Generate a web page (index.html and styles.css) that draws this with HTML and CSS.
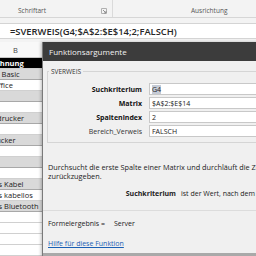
FILE: index.html
```html
<!DOCTYPE html>
<html>
<head>
  <title>Funktionsargumente</title>
  <link rel="stylesheet" href="styles.css">
</head>
<body>
  <div class="ribbon">
    <div class="group group-font">
      <span class="group-label">Schriftart</span>
      <svg class="launcher" width="6" height="6" viewBox="0 0 6 6">
        <path d="M0.5 0.5h5v5h-5z" fill="none" stroke="#b0b0b0" stroke-width="1"/>
        <path d="M2 2l3 3M5 3v2h-2" fill="none" stroke="#909090" stroke-width="1"/>
      </svg>
    </div>
    <div class="group group-align">
      <span class="group-label">Ausrichtung</span>
    </div>
  </div>

  <div class="formula-area">
    <div class="formula-bar">=SVERWEIS(G4;$A$2:$E$14;2;FALSCH)</div>
  </div>

  <div class="workspace">
    <div class="sheet">
      <div class="col-head">B</div>
      <div class="cell cell-head">Bezeichnung</div>
      <div class="cell odd">Visual Basic</div>
      <div class="cell">MS-Office</div>
      <div class="cell odd"></div>
      <div class="cell"></div>
      <div class="cell odd cell-cut">Tintendrucker</div>
      <div class="cell"></div>
      <div class="cell odd cell-cut-more">Fotodrucker</div>
      <div class="cell"></div>
      <div class="cell odd"></div>
      <div class="cell"></div>
      <div class="cell odd cell-maus">Maus Kabel</div>
      <div class="cell cell-maus">Maus kabellos</div>
      <div class="cell odd cell-maus">Maus Bluetooth</div>
      <div class="cell"></div>
      <div class="cell"></div>
      <div class="cell"></div>
      <div class="cell"></div>
    </div>

    <div class="dialog">
      <div class="dialog-title">Funktionsargumente</div>
      <div class="dialog-body">
        <fieldset class="args">
          <legend>SVERWEIS</legend>
          <div class="arg-row">
            <label class="arg-label strong">Suchkriterium</label>
            <div class="arg-input"><span class="sel">G4</span></div>
          </div>
          <div class="arg-row">
            <label class="arg-label strong">Matrix</label>
            <div class="arg-input">$A$2:$E$14</div>
          </div>
          <div class="arg-row">
            <label class="arg-label strong">Spaltenindex</label>
            <div class="arg-input">2</div>
          </div>
          <div class="arg-row">
            <label class="arg-label">Bereich_Verweis</label>
            <div class="arg-input">FALSCH</div>
          </div>
        </fieldset>

        <p class="desc">Durchsucht die erste Spalte einer Matrix und durchläuft die Zeile nach rechts, um den Wert einer Zelle<br>zurückzugeben.</p>

        <div class="arg-help">
          <span class="arg-help-name">Suchkriterium</span>
          <span class="arg-help-text">ist der Wert, nach dem in der ersten Spalte der Matrix gesucht wird.</span>
        </div>
      </div>

      <div class="dialog-foot">
        <div class="result">Formelergebnis =<span class="result-value">Server</span></div>
        <a class="help-link" href="#">Hilfe für diese Funktion</a>
      </div>
      <div class="dialog-bottom"></div>
    </div>
  </div>
</body>
</html>
```

FILE: styles.css
```css
* {
  box-sizing: border-box;
}

body {
  margin: 0;
  width: 256px;
  height: 256px;
  overflow: hidden;
  background-color: #ffffff;
  font-family: "Open Sans", "Noto Sans", sans-serif;
  color: #222222;
}

/* ribbon */
.ribbon {
  display: flex;
  height: 18px;
  background-color: #f3f3f3;
  border-bottom: 1px solid #d6d6d6;
}

.group {
  display: flex;
  align-items: center;
  padding-top: 4px;
  font-size: 6.5px;
  color: #555555;
}

.group-font {
  width: 113px;
  padding-left: 18px;
  border-right: 1px solid #dadada;
}

.launcher {
  margin-left: auto;
  margin-right: 5px;
}

.group-align {
  padding-left: 78px;
}

/* formula bar */
.formula-area {
  height: 24px;
  padding-top: 5px;
  background-color: #f3f3f3;
}

.formula-bar {
  height: 16px;
  padding-left: 10px;
  line-height: 15px;
  font-size: 9.4px;
  font-weight: 600;
  color: #262626;
  background-color: #ffffff;
  border-top: 1px solid #d4d4d4;
  border-bottom: 1px solid #d4d4d4;
  white-space: nowrap;
}

/* sheet */
.workspace {
  position: relative;
}

.sheet {
  width: 66px;
  margin-left: -23px;
}

.col-head {
  height: 16px;
  padding-left: 36px;
  padding-top: 2px;
  line-height: 13px;
  font-size: 7.5px;
  color: #444444;
  background-color: #f8f8f8;
  border-bottom: 1px solid #c6c6c6;
}

.cell {
  height: 11px;
  padding-left: 2px;
  line-height: 10px;
  font-size: 7.5px;
  white-space: nowrap;
  overflow: hidden;
  background-color: #ffffff;
  border-bottom: 1px solid #d0d0d0;
}

.cell.odd {
  background-color: #d9d9d9;
  border-bottom-color: #a8a8a8;
}

.cell-head {
  text-indent: -3px;
  background-color: #000000;
  color: #ffffff;
  font-weight: 700;
}

.cell-maus {
  padding-left: 6px;
}

.cell-cut {
  text-indent: -4px;
}

.cell-cut-more {
  text-indent: -6px;
}

/* dialog */
.dialog {
  position: absolute;
  left: 42px;
  top: 0;
  width: 230px;
  background-color: #f0f0f0;
  border-left: 1px solid #7a7a7a;
  box-shadow: -1px 0 3px rgba(0, 0, 0, 0.25);
  font-size: 7px;
}

.dialog-title {
  height: 19px;
  padding-left: 6px;
  line-height: 19px;
  font-size: 8px;
  color: #f2f2f2;
  background-color: #3c3c3c;
}

.dialog-body {
  padding: 6px 0 0 4px;
  height: 150px;
  border-bottom: 1px solid #dcdcdc;
}

.args {
  margin: 0;
  padding: 6px 0 4px 0;
  border: 1px solid #d5d5d5;
  border-right: none;
}

.args legend {
  padding: 0 2px;
  margin-left: 1px;
  font-size: 6.5px;
  color: #333333;
}

.arg-row {
  display: flex;
  align-items: center;
  height: 14px;
}

.arg-label {
  width: 101px;
  padding-right: 7px;
  text-align: right;
  color: #333333;
}

.arg-label.strong {
  font-weight: 700;
  color: #111111;
}

.arg-input {
  flex: 1;
  height: 12px;
  padding-left: 2px;
  line-height: 11px;
  background-color: #ffffff;
  border: 1px solid #c8c8c8;
  border-right: none;
  white-space: nowrap;
}

.sel {
  background-color: #c5cbd6;
}

.desc {
  margin: 20px 0 0 1px;
  width: 360px;
  line-height: 9px;
  font-size: 7.3px;
  white-space: nowrap;
}

.arg-help {
  display: flex;
  margin-top: 8px;
  white-space: nowrap;
}

.arg-help-name {
  flex-shrink: 0;
  width: 134px;
  padding-right: 5px;
  text-align: right;
  font-weight: 700;
}

.dialog-foot {
  height: 42px;
  padding: 8px 0 0 5px;
}

.result-value {
  margin-left: 9px;
}

.help-link {
  display: block;
  margin-top: 11px;
  color: #1a5fb4;
  text-decoration: underline;
}

.dialog-bottom {
  height: 4px;
  background-color: #a9a9a9;
}
```
